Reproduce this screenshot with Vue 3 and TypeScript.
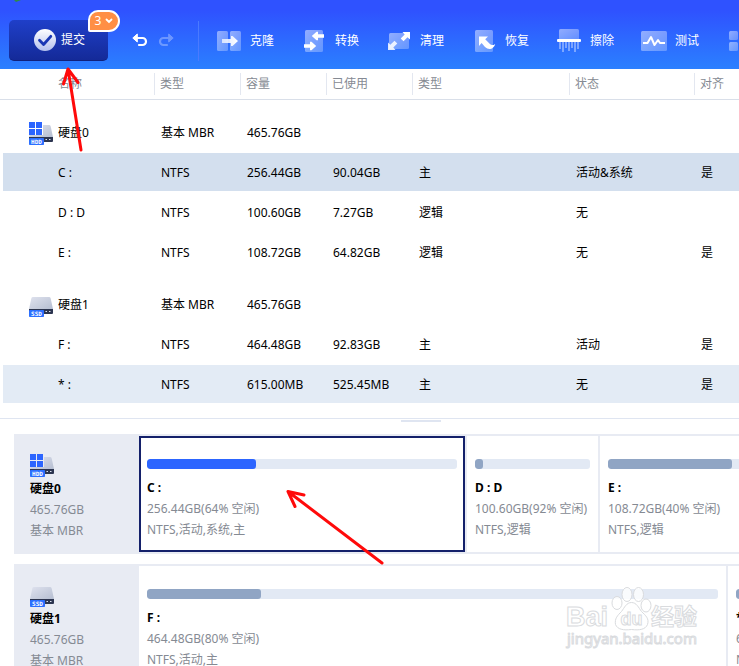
<script setup lang="ts">
interface VolumeRow {
  name: string
  fs: string
  size: string
  used: string
  kind: string
  status: string
  aligned: string
  state?: 'selected' | 'marked'
}

interface Partition {
  name: string
  summary: string
  detail: string
  share: number
  used: number
  active?: boolean
}

interface Disk {
  name: string
  label: 'HDD' | 'SSD'
  type: string
  size: string
  rows: VolumeRow[]
  partitions: Partition[]
}

const columns = ['名称', '类型', '容量', '已使用', '类型', '状态', '对齐']

const tools = [
  { id: 'clone', label: '克隆' },
  { id: 'convert', label: '转换' },
  { id: 'clean', label: '清理' },
  { id: 'restore', label: '恢复' },
  { id: 'wipe', label: '擦除' },
  { id: 'test', label: '测试' },
]

const disks: Disk[] = [
  {
    name: '硬盘0',
    label: 'HDD',
    type: '基本 MBR',
    size: '465.76GB',
    rows: [
      { name: 'C :', fs: 'NTFS', size: '256.44GB', used: '90.04GB', kind: '主', status: '活动&系统', aligned: '是', state: 'selected' },
      { name: 'D : D', fs: 'NTFS', size: '100.60GB', used: '7.27GB', kind: '逻辑', status: '无', aligned: '' },
      { name: 'E :', fs: 'NTFS', size: '108.72GB', used: '64.82GB', kind: '逻辑', status: '无', aligned: '是' },
    ],
    partitions: [
      { name: 'C :', summary: '256.44GB(64% 空闲)', detail: 'NTFS,活动,系统,主', share: 328, used: 35, active: true },
      { name: 'D : D', summary: '100.60GB(92% 空闲)', detail: 'NTFS,逻辑', share: 133, used: 7 },
      { name: 'E :', summary: '108.72GB(40% 空闲)', detail: 'NTFS,逻辑', share: 224, used: 60 },
    ],
  },
  {
    name: '硬盘1',
    label: 'SSD',
    type: '基本 MBR',
    size: '465.76GB',
    rows: [
      { name: 'F :', fs: 'NTFS', size: '464.48GB', used: '92.83GB', kind: '主', status: '活动', aligned: '是' },
      { name: '* :', fs: 'NTFS', size: '615.00MB', used: '525.45MB', kind: '主', status: '无', aligned: '是', state: 'marked' },
    ],
    partitions: [
      { name: 'F :', summary: '464.48GB(80% 空闲)', detail: 'NTFS,活动,主', share: 589, used: 20 },
      { name: '* :', summary: '615.00MB(15% 空闲)', detail: 'NTFS,主', share: 96, used: 85 },
    ],
  },
]

const tracks = (disk: Disk) => disk.partitions.map((p) => `minmax(0, ${p.share}fr)`).join(' ')
</script>

<template>
  <div class="app">
    <svg class="defs" width="0" height="0" aria-hidden="true">
      <defs>
        <linearGradient id="tile" x1="0" y1="0" x2="1" y2="1">
          <stop offset="0" stop-color="#fff" stop-opacity=".48" />
          <stop offset="1" stop-color="#fff" stop-opacity=".26" />
        </linearGradient>
        <linearGradient id="glyph" x1="0" y1="0" x2="1" y2="0">
          <stop offset="0" stop-color="#fff" stop-opacity=".7" />
          <stop offset="1" stop-color="#fff" />
        </linearGradient>
        <linearGradient id="disc" x1="0" y1="0" x2="0" y2="1">
          <stop offset="0" stop-color="#fff" />
          <stop offset="1" stop-color="#b3c0ee" />
        </linearGradient>
        <linearGradient id="metal" x1="0" y1="0" x2="1" y2="1">
          <stop offset="0" stop-color="#dfe2ee" />
          <stop offset="1" stop-color="#b4bdd0" />
        </linearGradient>
        <symbol id="drive" viewBox="0 0 24 28">
          <path d="M4 7h16q1.400 0 1.700 1.400L24 19v1H0v-1L2.300 8.400Q2.600 7 4 7z" fill="url(#metal)" />
          <path d="M0 19h24v4q0 1-1 1H0z" fill="#2c3550" />
          <path d="M16.500 21.500h1.500M20 21.500h1.500" stroke="#dde3f2" stroke-width="1" />
          <rect x="0" y="20" width="15" height="7" rx=".8" fill="#2c6fff" />
        </symbol>
      </defs>
    </svg>

    <header class="toolbar">
      <svg class="leaf" width="8" height="3" viewBox="0 0 8 3" aria-hidden="true">
        <path d="M0 0L2 2L7 0z" fill="#2f8a4a" />
      </svg>
      <div class="submit-box">
        <button class="submit" type="button">
          <svg width="22" height="22" viewBox="0 0 22 22" aria-hidden="true">
            <circle cx="11" cy="11" r="11" fill="url(#disc)" />
            <path d="M5.500 11.200l4.100 4.300 7.200-8.200" fill="none" stroke="#1937b4" stroke-width="2.800" stroke-linecap="round" stroke-linejoin="round" />
          </svg>
          <span>提交</span>
        </button>
        <button class="badge" type="button">
          <span>3</span>
          <svg width="8" height="6" viewBox="0 0 8 6" aria-hidden="true">
            <path d="M1.500 1.500L4 4l2.500-2.500" fill="none" stroke="#fff" stroke-width="1.800" stroke-linecap="round" />
          </svg>
        </button>
      </div>

      <div class="history">
        <button class="plain" type="button" aria-label="撤销">
          <svg width="16" height="14" viewBox="0 0 16 14" aria-hidden="true">
            <path d="M3 4h7.500a3.500 3.500 0 0 1 0 7H7" fill="none" stroke="#fff" stroke-width="2.200" stroke-linecap="round" />
            <path d="M5.300 0v8L.8 4z" fill="#fff" stroke="#fff" stroke-linejoin="round" />
          </svg>
        </button>
        <button class="plain faded" type="button" aria-label="重做">
          <svg width="16" height="14" viewBox="0 0 16 14" aria-hidden="true">
            <path d="M13 4H5.500a3.500 3.500 0 0 0 0 7H9" fill="none" stroke="#fff" stroke-width="2.200" stroke-linecap="round" />
            <path d="M10.700 0v8l4.500-4z" fill="#fff" stroke="#fff" stroke-linejoin="round" />
          </svg>
        </button>
      </div>

      <nav class="tools">
        <button v-for="tool in tools" :key="tool.id" class="tool" type="button">
          <svg width="24" height="24" viewBox="0 0 24 24" aria-hidden="true">
            <template v-if="tool.id === 'clone'">
              <rect x="0" y="2" width="11" height="20" rx="1.500" fill="url(#tile)" />
              <rect x="13" y="2" width="11" height="20" rx="1.500" fill="url(#tile)" />
              <path d="M5 10h9V7h1.500L21 12l-5.500 5H14v-3H5z" fill="url(#glyph)" />
            </template>
            <template v-else-if="tool.id === 'convert'">
              <rect x="3" y="1" width="18" height="22" rx="1.500" fill="url(#tile)" />
              <path d="M22 5.200h-6V2.800h-1.500L9.800 7l4.700 4.200H16V8.800h6z" fill="#fff" />
              <path d="M2 15.200h6v-2.400h1.500L14.200 17l-4.700 4.200H8v-2.400H2z" fill="#fff" />
            </template>
            <template v-else-if="tool.id === 'clean'">
              <rect x="2" y="4" width="20" height="16" rx="1.500" fill="url(#tile)" />
              <path d="M15.500 3H23v7.500l-2.500-2.300-4 4-2.800-2.800 4-4z" fill="#fff" />
              <path d="M8.500 21H1v-7.500l2.300 2.300 4.200-4 2.800 2.800-4 4z" fill="#fff" fill-opacity=".85" />
            </template>
            <template v-else-if="tool.id === 'restore'">
              <rect x="3" y="1" width="18" height="22" rx="1.500" fill="url(#tile)" />
              <path d="M7 7.500h9l-2.800 2.800 5 5q2 1.800 5-.4-1.200 4.200-5 5-3 .2-5.200-2l-3.400-3.800L7 17z" fill="#fff" />
            </template>
            <template v-else-if="tool.id === 'wipe'">
              <path d="M2 10V1.500Q2 0 3.500 0h17Q22 0 22 1.500V10z" fill="url(#tile)" />
              <rect x="0" y="10" width="24" height="3" rx="1" fill="#fff" />
              <path d="M3 13v7M6 13v10M9 13v6M12 13v9M15 13v6M18 13v10M21 13v7" stroke="#fff" stroke-opacity=".5" stroke-width="1.500" />
            </template>
            <template v-else>
              <rect x="-1" y="2" width="26" height="20" rx="1.500" fill="url(#tile)" />
              <path d="M1 14h4.500L9 8l3.500 8L16 11l2 3h5" fill="none" stroke="#fff" stroke-width="2" stroke-linejoin="round" />
            </template>
          </svg>
          <span>{{ tool.label }}</span>
        </button>
        <button class="tool" type="button" aria-label="更多">
          <svg width="24" height="24" viewBox="0 0 24 24" aria-hidden="true">
            <g fill="url(#tile)">
              <rect x="2" y="2" width="9" height="9" rx="1.500" />
              <rect x="2" y="13" width="9" height="9" rx="1.500" />
              <rect x="13" y="2" width="9" height="9" rx="1.500" />
              <rect x="13" y="13" width="9" height="9" rx="1.500" />
            </g>
          </svg>
        </button>
      </nav>
    </header>

    <section class="listing">
      <table class="volumes">
        <colgroup>
          <col class="w-name" />
          <col class="w-small" />
          <col class="w-small" />
          <col class="w-small" />
          <col class="w-kind" />
          <col class="w-status" />
          <col />
        </colgroup>
        <thead>
          <tr>
            <th v-for="(column, i) in columns" :key="i" scope="col"><span>{{ column }}</span></th>
          </tr>
        </thead>
        <tbody v-for="disk in disks" :key="disk.name">
          <tr class="disk-row">
            <td>
              <div class="disk-name">
                <svg width="24" height="28" viewBox="0 0 24 28" aria-hidden="true">
                  <use href="#drive" />
                  <g v-if="disk.label === 'HDD'">
                    <path d="M0 4h14v13H0z" fill="#fff" />
                    <path d="M0 4h6v6H0zM7 4h6v6H7zM0 11h6v6H0zM7 11h6v6H7z" fill="#2c65ff" />
                  </g>
                  <text x="7.500" y="26" class="chip">{{ disk.label }}</text>
                </svg>
                <span>{{ disk.name }}</span>
              </div>
            </td>
            <td>{{ disk.type }}</td>
            <td>{{ disk.size }}</td>
            <td></td>
            <td></td>
            <td></td>
            <td></td>
          </tr>
          <tr v-for="row in disk.rows" :key="row.name" :class="row.state">
            <td>{{ row.name }}</td>
            <td>{{ row.fs }}</td>
            <td>{{ row.size }}</td>
            <td>{{ row.used }}</td>
            <td>{{ row.kind }}</td>
            <td>{{ row.status }}</td>
            <td>{{ row.aligned }}</td>
          </tr>
        </tbody>
      </table>
    </section>

    <div class="splitter"><span class="grip"></span></div>

    <section class="maps">
      <article v-for="disk in disks" :key="disk.name" class="map">
        <div class="map-head">
          <svg width="24" height="28" viewBox="0 0 24 28" aria-hidden="true">
            <use href="#drive" />
            <g v-if="disk.label === 'HDD'">
              <path d="M0 4h14v13H0z" fill="#e8ebf3" />
              <path d="M0 4h6v6H0zM7 4h6v6H7zM0 11h6v6H0zM7 11h6v6H7z" fill="#2c65ff" />
            </g>
            <text x="7.500" y="26" class="chip">{{ disk.label }}</text>
          </svg>
          <strong>{{ disk.name }}</strong>
          <span>{{ disk.size }}</span>
          <span>{{ disk.type }}</span>
        </div>
        <div class="parts" :style="{ gridTemplateColumns: tracks(disk) }">
          <div v-for="part in disk.partitions" :key="part.name" class="cell">
            <div class="part" :class="{ active: part.active }">
              <div class="bar"><div class="fill" :style="{ width: part.used + '%' }"></div></div>
              <strong>{{ part.name }}</strong>
              <span>{{ part.summary }}</span>
              <span>{{ part.detail }}</span>
            </div>
          </div>
        </div>
      </article>
    </section>

    <svg class="watermark" width="136" height="72" viewBox="0 0 136 72" aria-hidden="true">
      <g fill="#fff" fill-opacity=".8" stroke="#d9dbde" stroke-width="1">
        <ellipse cx="51" cy="19" rx="5" ry="6.500" />
        <ellipse cx="61" cy="10.500" rx="5" ry="7" />
        <ellipse cx="72.500" cy="10.500" rx="5" ry="7" />
        <ellipse cx="80" cy="21.500" rx="5" ry="6.500" />
        <path d="M65.500 18.500c5 0 7 5 10 9 4 4 8 7 6 13-2 5-8 6-16 5-8 1-14 0-16-5-1-6 2-9 6-13 3-4 5-9 10-9z" />
        <text x="0" y="42" class="wm-logo">Bai</text>
        <text x="65.500" y="41" class="wm-du">du</text>
        <text x="85" y="41" class="wm-cjk">经验</text>
        <text x="1" y="60" class="wm-url">jingyan.baidu.com</text>
      </g>
    </svg>

    <svg class="arrows" width="400" height="600" viewBox="0 0 400 600" aria-hidden="true">
      <g fill="none" stroke="#ff0a0a" stroke-width="3" stroke-linecap="round" stroke-linejoin="round">
        <path d="M81 150L68 69M63.500 84L68 69l10 13.500" />
        <path d="M382 563l-94-71.500M304 495l-16-3.500 7 15" />
      </g>
    </svg>
  </div>
</template>

<style>
html,
body {
  overflow: hidden;
  background: #fff;
}
</style>

<style scoped>
.app {
  position: relative;
  display: flex;
  flex-direction: column;
  height: 100vh;
  overflow: hidden;
  font: 12px/20px "Noto Sans", "Noto Sans CJK SC", sans-serif;
  color: #000;
}
.defs {
  position: absolute;
}
button {
  margin: 0;
  padding: 0;
  border: 0;
  background: none;
  color: #fff;
  font: inherit;
  cursor: pointer;
}
svg {
  display: block;
  flex: none;
  overflow: visible;
}
.toolbar {
  position: relative;
  display: flex;
  flex: none;
  align-items: center;
  height: 57px;
  padding: 12px 0 0 9px;
  background: linear-gradient(#2f52ff 15%, #2b80ff);
}
.leaf {
  position: absolute;
  top: 0;
  left: 14px;
}
.submit-box {
  position: relative;
  flex: none;
}
.submit {
  display: flex;
  align-items: center;
  justify-content: center;
  gap: 5px;
  width: 99px;
  height: 41px;
  padding-left: 2px;
  border-radius: 5px;
  background: linear-gradient(#1f3fc9, #142a98);
  border-bottom: 1px solid #10217c;
}
.badge {
  position: absolute;
  top: -10px;
  right: -12px;
  display: flex;
  align-items: center;
  justify-content: center;
  gap: 4px;
  width: 32px;
  height: 22px;
  border: 2px solid #fff;
  border-radius: 10px 11px 11px 2px;
  background: #ff8f45;
  line-height: 18px;
}
.history {
  display: flex;
  flex: none;
  gap: 10px;
  padding-left: 24px;
}
.faded {
  opacity: 0.3;
}
.tools {
  display: flex;
  flex: none;
  align-items: center;
  gap: 28px;
  height: 40px;
  margin-left: 24px;
  padding-left: 18px;
  border-left: 1px solid #4a7aff;
}
.tool {
  display: flex;
  align-items: center;
  gap: 9px;
}
.listing {
  flex: none;
  padding-left: 3px;
  position: relative;
}
.listing::before {
  content: "";
  position: absolute;
  top: 30px;
  left: 0;
  width: 3px;
  height: 1px;
  background: #d9dfe9;
}
.volumes {
  width: 100%;
  table-layout: fixed;
  border-collapse: separate;
  border-spacing: 0;
}
.w-name {
  width: 151px;
}
.w-small {
  width: 86px;
}
.w-kind {
  width: 157px;
}
.w-status {
  width: 125px;
}
th {
  height: 22px;
  padding: 4px 0;
  border-bottom: 1px solid #d9dfe9;
  color: #858a93;
  font-weight: 400;
  text-align: left;
}
th span {
  display: block;
  padding-left: 5px;
  border-left: 1px solid #e3e7f0;
  line-height: 22px;
}
th:first-child span {
  padding-left: 54px;
  border-color: transparent;
}
td {
  height: 36px;
  padding: 2px 0 0 7px;
  border: solid transparent;
  border-width: 1px 0;
  background-clip: padding-box;
  white-space: nowrap;
}
td:first-child {
  padding-left: 55px;
}
.disk-row td {
  padding-top: 14px;
}
.disk-row td:first-child {
  padding-left: 26px;
}
.disk-name {
  display: flex;
  align-items: center;
  gap: 5px;
}
.disk-name svg {
  margin-bottom: 2px;
}
.selected td {
  background-color: #d3dfee;
}
.marked td {
  background-color: #e3ebf5;
}
.chip {
  fill: #fff;
  font: 700 6px "DejaVu Sans Mono", monospace;
  text-anchor: middle;
}
.splitter {
  flex: none;
  height: 15px;
  margin-top: 14px;
  border-top: 1px solid #dfe5f1;
}
.grip {
  display: block;
  width: 40px;
  height: 2px;
  margin: 1px auto 0;
  position: relative;
  left: 51px;
  background: #dfe5f1;
}
.maps {
  display: flex;
  flex: none;
  flex-direction: column;
  gap: 10px;
  margin-right: -85px;
  padding-left: 14px;
}
.map {
  display: flex;
  height: 120px;
  background: #e8ebf3;
  color: #858a93;
  line-height: 21px;
  white-space: nowrap;
}
.map strong {
  color: #000;
}
.map-head {
  display: flex;
  flex: none;
  flex-direction: column;
  width: 109px;
  padding: 16px 0 0 16px;
}
.parts {
  display: grid;
  flex: 1;
  min-width: 0;
  padding: 2px 0;
}
.cell {
  display: flex;
  padding-right: 2px;
}
.part {
  display: flex;
  flex: 1;
  flex-direction: column;
  min-width: 0;
  padding: 21px 6px 0;
  border: 2px solid #fff;
  background: #fff;
  overflow: hidden;
}
.part.active {
  border-color: #14206a;
}
.bar {
  flex: none;
  height: 10px;
  margin-bottom: 8px;
  border-radius: 3px;
  background: #e2e9f4;
  overflow: hidden;
}
.fill {
  height: 100%;
  border-radius: 3px;
  background: #90a5c4;
}
.active .fill {
  background: #2c65ff;
}
.watermark {
  position: absolute;
  right: 37px;
  bottom: 10px;
}
.wm-logo {
  font: 700 27px "Liberation Sans", sans-serif;
}
.wm-cjk {
  font: 700 23px "Noto Sans CJK SC", sans-serif;
}
.wm-du {
  font: 700 18px "Liberation Sans", sans-serif;
  text-anchor: middle;
}
.wm-url {
  font: 400 15px "Noto Sans", sans-serif;
}
.arrows {
  position: absolute;
  top: 0;
  left: 0;
  pointer-events: none;
}
</style>
